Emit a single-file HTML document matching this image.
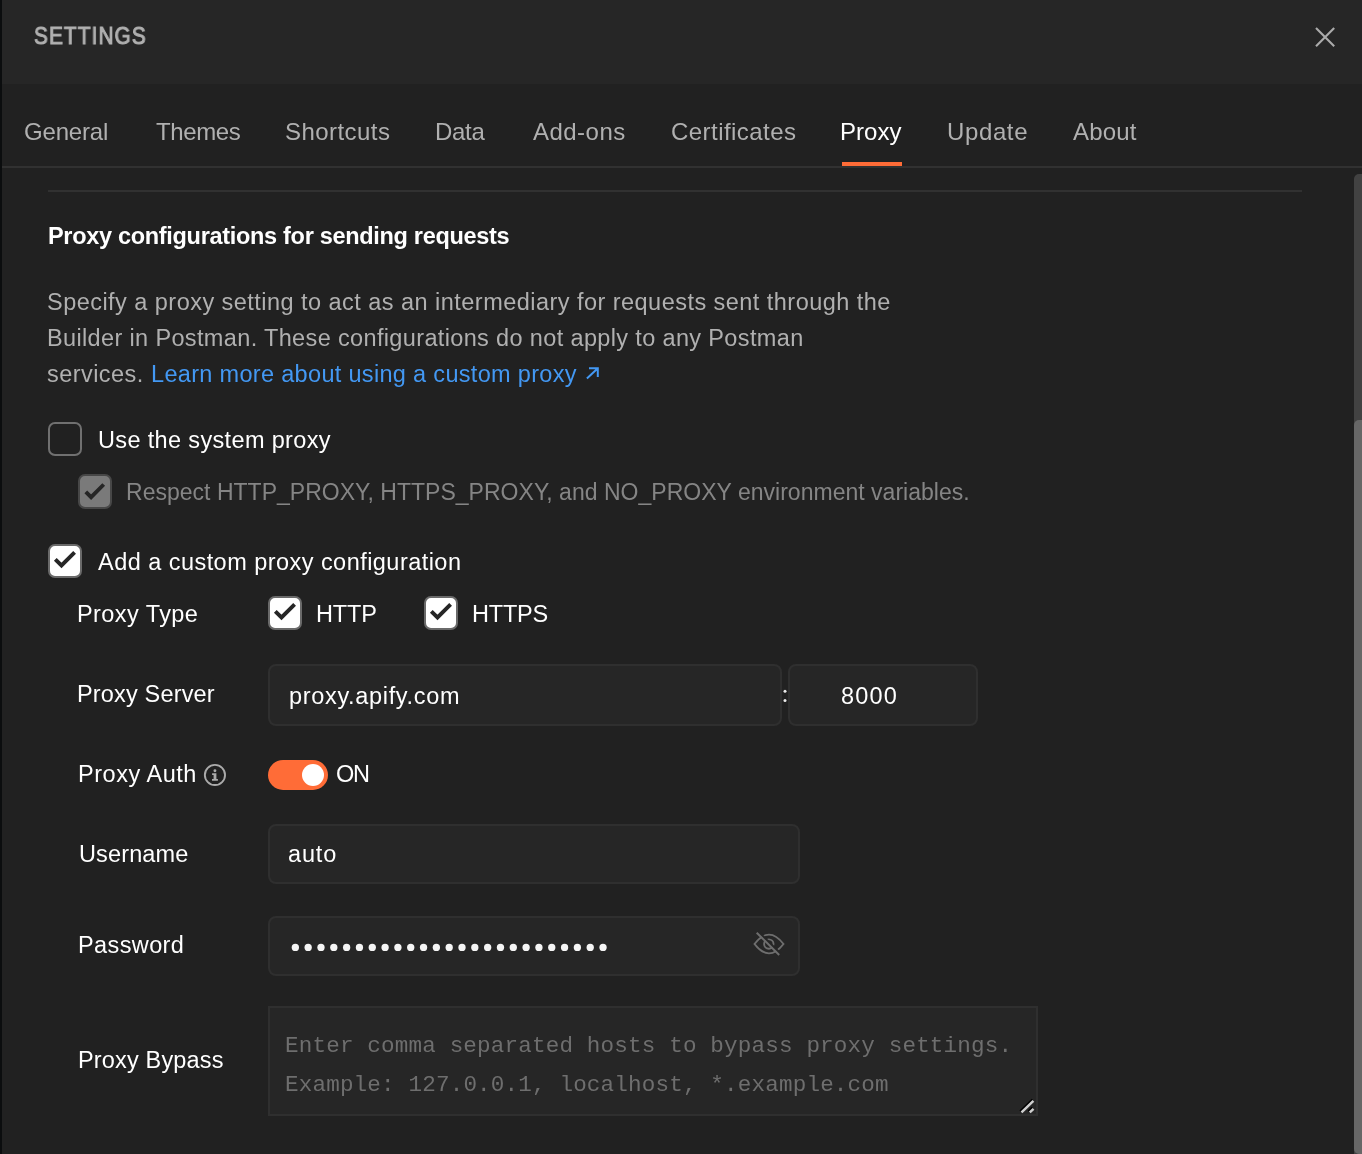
<!DOCTYPE html>
<html><head><meta charset="utf-8">
<style>
*{box-sizing:border-box;margin:0;padding:0}
html,body{width:1362px;height:1154px;overflow:hidden;background:#212121;font-family:"Liberation Sans",sans-serif;position:relative;-webkit-font-smoothing:antialiased}
.t{position:absolute;white-space:nowrap;line-height:normal;will-change:transform}
.a{position:absolute}
.cb{position:absolute;width:34px;height:34px;border-radius:7px;border:2px solid #6a6a6a;background:#fff}
.inp{position:absolute;background:#262626;border:2px solid #2f2f2f;border-radius:8px}
</style></head>
<body>
<div class="a" style="left:0;top:0;width:2px;height:1154px;background:#0b0d0e"></div>
<div class="a" style="left:2px;top:0;width:1360px;height:84px;background:#262626"></div>
<svg class="a" style="left:1305px;top:17px" width="40" height="40" viewBox="1305 17 40 40"><path d="M1316 28L1334.2 46.2M1334.2 28L1316 46.2" stroke="#ababab" stroke-width="2.1" fill="none"/></svg>
<div class="a" style="left:842px;top:162px;width:60px;height:4px;background:#ff6c37"></div>
<div class="a" style="left:2px;top:166px;width:1360px;height:2px;background:#313131"></div>
<div class="a" style="left:1354px;top:174px;width:16px;height:990px;background:#424242;border-radius:5px"></div>
<div class="a" style="left:1354px;top:420px;width:16px;height:734px;background:#676767;border-radius:5px"></div>
<div class="a" style="left:48px;top:190px;width:1254px;height:2px;background:#313131"></div>
<svg class="a" style="left:580px;top:360px" width="25" height="25" viewBox="580 360 25 25"><path d="M589 368.3H597.8V377M597.3 368.7L586.9 378.4" stroke="#4398f3" stroke-width="2" fill="none"/></svg>
<!-- checkboxes -->
<div class="cb" style="left:48px;top:422px;background:transparent;border-width:2px;border-color:#707070"></div>
<div class="cb" style="left:78.4px;top:474.2px;width:33.3px;height:35.3px;background:#7a7a7a;border-color:#474747"></div>
<svg class="a" style="left:78px;top:474px" width="36" height="36" viewBox="78.4 474.2 36 36"><path d="M86.2 492.1L91.5 497.4L104.1 484.7" stroke="#262626" stroke-width="3.9" fill="none"/></svg>
<div class="cb" style="left:48px;top:544px"></div>
<svg class="a" style="left:48px;top:544px" width="34" height="34" viewBox="0 0 34 34"><path d="M7.3 15.3L13.5 21.5L26.6 8.4" stroke="#262626" stroke-width="3.9" fill="none"/></svg>
<div class="cb" style="left:268.3px;top:596px"></div>
<svg class="a" style="left:268.3px;top:596px" width="34" height="34" viewBox="0 0 34 34"><path d="M7.3 15.3L13.5 21.5L26.6 8.4" stroke="#262626" stroke-width="3.9" fill="none"/></svg>
<div class="cb" style="left:424px;top:596px"></div>
<svg class="a" style="left:424px;top:596px" width="34" height="34" viewBox="0 0 34 34"><path d="M7.3 15.3L13.5 21.5L26.6 8.4" stroke="#262626" stroke-width="3.9" fill="none"/></svg>
<!-- inputs -->
<div class="inp" style="left:268px;top:664px;width:514px;height:62px"></div>
<svg class="a" style="left:780px;top:685px" width="10" height="20" viewBox="780 685 10 20"><circle cx="785" cy="691.3" r="1.5" fill="#ececec"/><circle cx="785" cy="700.6" r="1.5" fill="#ececec"/></svg>
<div class="inp" style="left:788px;top:664px;width:190px;height:62px"></div>
<div class="a" style="left:268px;top:760px;width:60px;height:30px;border-radius:15px;background:#ff6c37"></div>
<div class="a" style="left:302px;top:764px;width:22px;height:22px;border-radius:11px;background:#fff"></div>
<svg class="a" style="left:200px;top:760px" width="30" height="30" viewBox="200 760 30 30"><circle cx="214.95" cy="774.95" r="10.1" stroke="#ababab" stroke-width="1.9" fill="none"/><circle cx="214.95" cy="770.8" r="1.45" fill="#ababab"/><path d="M212.1 773.3H216.4V780.8H212V779H213.6V775.1H212.1Z M213.6 779H217.9V780.8H212Z" fill="#ababab"/></svg>
<div class="inp" style="left:268px;top:824px;width:532px;height:60px"></div>
<div class="inp" style="left:268px;top:916px;width:532px;height:60px"></div>
<svg class="a" style="left:280px;top:935px" width="340" height="25" viewBox="280 935 340 25" id="dots"><circle cx="295.35" cy="947.4" r="3.65" fill="#f5f5f5"/><circle cx="308.17" cy="947.4" r="3.65" fill="#f5f5f5"/><circle cx="320.99" cy="947.4" r="3.65" fill="#f5f5f5"/><circle cx="333.81" cy="947.4" r="3.65" fill="#f5f5f5"/><circle cx="346.63" cy="947.4" r="3.65" fill="#f5f5f5"/><circle cx="359.45" cy="947.4" r="3.65" fill="#f5f5f5"/><circle cx="372.27" cy="947.4" r="3.65" fill="#f5f5f5"/><circle cx="385.09" cy="947.4" r="3.65" fill="#f5f5f5"/><circle cx="397.91" cy="947.4" r="3.65" fill="#f5f5f5"/><circle cx="410.73" cy="947.4" r="3.65" fill="#f5f5f5"/><circle cx="423.55" cy="947.4" r="3.65" fill="#f5f5f5"/><circle cx="436.37" cy="947.4" r="3.65" fill="#f5f5f5"/><circle cx="449.19" cy="947.4" r="3.65" fill="#f5f5f5"/><circle cx="462.01" cy="947.4" r="3.65" fill="#f5f5f5"/><circle cx="474.83" cy="947.4" r="3.65" fill="#f5f5f5"/><circle cx="487.65" cy="947.4" r="3.65" fill="#f5f5f5"/><circle cx="500.47" cy="947.4" r="3.65" fill="#f5f5f5"/><circle cx="513.29" cy="947.4" r="3.65" fill="#f5f5f5"/><circle cx="526.11" cy="947.4" r="3.65" fill="#f5f5f5"/><circle cx="538.93" cy="947.4" r="3.65" fill="#f5f5f5"/><circle cx="551.75" cy="947.4" r="3.65" fill="#f5f5f5"/><circle cx="564.57" cy="947.4" r="3.65" fill="#f5f5f5"/><circle cx="577.39" cy="947.4" r="3.65" fill="#f5f5f5"/><circle cx="590.21" cy="947.4" r="3.65" fill="#f5f5f5"/><circle cx="603.03" cy="947.4" r="3.65" fill="#f5f5f5"/></svg>
<svg class="a" style="left:748px;top:926px" width="42" height="36" viewBox="748 926 42 36"><path d="M754.5 944Q769 925.2 783.5 944Q769 962.8 754.5 944Z" stroke="#6e6e6e" stroke-width="1.9" fill="none" stroke-linejoin="miter"/><circle cx="768.8" cy="944.1" r="4.7" stroke="#6e6e6e" stroke-width="1.9" fill="none"/><path d="M758.2 931.6L780.7 953.9" stroke="#262626" stroke-width="2.4"/><path d="M756.7 932.7L779.2 955" stroke="#6e6e6e" stroke-width="2"/></svg>
<div class="a" style="left:268px;top:1006px;width:770px;height:110px;background:#262626;border:2px solid #2f2f2f"></div>
<svg class="a" style="left:1015px;top:1095px" width="23" height="21" viewBox="1015 1095 23 21"><path d="M1020.3 1111.3L1032.6 1099.6M1028.5 1111.4L1032.4 1107.7" stroke="#000" stroke-width="2.4"/><path d="M1021.5 1112.3L1033.4 1100.9M1029.8 1112.4L1033.5 1108.9" stroke="#cfcfcf" stroke-width="2.5"/></svg>
<div class="t" id="title" style="left:33.80px;top:22.70px;font-family:'Liberation Sans',sans-serif;font-weight:400;font-size:23px;color:#b0b0b0;letter-spacing:1.300px;-webkit-text-stroke:1px #b0b0b0;transform:scaleX(0.9);transform-origin:0 0">SETTINGS</div>
<div class="t" id="t1" style="left:24.20px;top:118.32px;font-family:'Liberation Sans',sans-serif;font-weight:400;font-size:24px;color:#b0b0b0;letter-spacing:-0.167px;">General</div>
<div class="t" id="t2" style="left:155.60px;top:118.32px;font-family:'Liberation Sans',sans-serif;font-weight:400;font-size:24px;color:#b0b0b0;letter-spacing:-0.380px;">Themes</div>
<div class="t" id="t3" style="left:285.20px;top:118.32px;font-family:'Liberation Sans',sans-serif;font-weight:400;font-size:24px;color:#b0b0b0;letter-spacing:0.450px;">Shortcuts</div>
<div class="t" id="t4" style="left:435.00px;top:118.32px;font-family:'Liberation Sans',sans-serif;font-weight:400;font-size:24px;color:#b0b0b0;letter-spacing:-0.300px;">Data</div>
<div class="t" id="t5" style="left:533.40px;top:118.32px;font-family:'Liberation Sans',sans-serif;font-weight:400;font-size:24px;color:#b0b0b0;letter-spacing:0.467px;">Add-ons</div>
<div class="t" id="t6" style="left:671.20px;top:118.32px;font-family:'Liberation Sans',sans-serif;font-weight:400;font-size:24px;color:#b0b0b0;letter-spacing:0.455px;">Certificates</div>
<div class="t" id="t7" style="left:840.40px;top:118.32px;font-family:'Liberation Sans',sans-serif;font-weight:400;font-size:24px;color:#ffffff;letter-spacing:0.025px;">Proxy</div>
<div class="t" id="t8" style="left:946.80px;top:118.32px;font-family:'Liberation Sans',sans-serif;font-weight:400;font-size:24px;color:#b0b0b0;letter-spacing:0.620px;">Update</div>
<div class="t" id="t9" style="left:1073.40px;top:118.32px;font-family:'Liberation Sans',sans-serif;font-weight:400;font-size:24px;color:#b0b0b0;letter-spacing:0.175px;">About</div>
<div class="t" id="h2" style="left:48.20px;top:223.10px;font-family:'Liberation Sans',sans-serif;font-weight:700;font-size:23.5px;color:#ffffff;letter-spacing:-0.309px;">Proxy configurations for sending requests</div>
<div class="t" id="p1" style="left:47.00px;top:289.32px;font-family:'Liberation Sans',sans-serif;font-weight:400;font-size:23.5px;color:#b0b0b0;letter-spacing:0.463px;">Specify a proxy setting to act as an intermediary for requests sent through the</div>
<div class="t" id="p2" style="left:46.60px;top:325.01px;font-family:'Liberation Sans',sans-serif;font-weight:400;font-size:23.5px;color:#b0b0b0;letter-spacing:0.355px;">Builder in Postman. These configurations do not apply to any Postman</div>
<div class="t" id="p3" style="left:47.00px;top:361.01px;font-family:'Liberation Sans',sans-serif;font-weight:400;font-size:23.5px;color:#b0b0b0;letter-spacing:0.438px;">services.</div>
<div class="t" id="p4" style="left:150.60px;top:361.01px;font-family:'Liberation Sans',sans-serif;font-weight:400;font-size:23.5px;color:#4398f3;letter-spacing:0.319px;">Learn more about using a custom proxy</div>
<div class="t" id="l1" style="left:98.20px;top:427.01px;font-family:'Liberation Sans',sans-serif;font-weight:400;font-size:23.5px;color:#ffffff;letter-spacing:0.347px;">Use the system proxy</div>
<div class="t" id="l2" style="left:126.40px;top:479.00px;font-family:'Liberation Sans',sans-serif;font-weight:400;font-size:23px;color:#858585;letter-spacing:0.019px;">Respect HTTP_PROXY, HTTPS_PROXY, and NO_PROXY environment variables.</div>
<div class="t" id="l3" style="left:98.00px;top:548.91px;font-family:'Liberation Sans',sans-serif;font-weight:400;font-size:23.5px;color:#ffffff;letter-spacing:0.458px;">Add a custom proxy configuration</div>
<div class="t" id="l4" style="left:77.40px;top:601.01px;font-family:'Liberation Sans',sans-serif;font-weight:400;font-size:23.5px;color:#ffffff;letter-spacing:0.422px;">Proxy Type</div>
<div class="t" id="l5" style="left:316.20px;top:601.01px;font-family:'Liberation Sans',sans-serif;font-weight:400;font-size:23.5px;color:#ffffff;letter-spacing:-0.133px;">HTTP</div>
<div class="t" id="l6" style="left:472.20px;top:601.01px;font-family:'Liberation Sans',sans-serif;font-weight:400;font-size:23.5px;color:#ffffff;letter-spacing:-0.225px;">HTTPS</div>
<div class="t" id="l7" style="left:77.40px;top:681.21px;font-family:'Liberation Sans',sans-serif;font-weight:400;font-size:23.5px;color:#ffffff;letter-spacing:0.164px;">Proxy Server</div>
<div class="t" id="v1" style="left:289.00px;top:683.01px;font-family:'Liberation Sans',sans-serif;font-weight:400;font-size:23.5px;color:#ffffff;letter-spacing:0.671px;">proxy.apify.com</div>
<div class="t" id="v2" style="left:840.80px;top:683.01px;font-family:'Liberation Sans',sans-serif;font-weight:400;font-size:23.5px;color:#ffffff;letter-spacing:1.167px;">8000</div>
<div class="t" id="l8" style="left:77.80px;top:760.82px;font-family:'Liberation Sans',sans-serif;font-weight:400;font-size:23.5px;color:#ffffff;letter-spacing:0.533px;">Proxy Auth</div>
<div class="t" id="l9" style="left:336.00px;top:760.91px;font-family:'Liberation Sans',sans-serif;font-weight:400;font-size:23.5px;color:#ffffff;letter-spacing:-1.300px;">ON</div>
<div class="t" id="l10" style="left:78.60px;top:840.91px;font-family:'Liberation Sans',sans-serif;font-weight:400;font-size:23.5px;color:#ffffff;letter-spacing:0.129px;">Username</div>
<div class="t" id="v3" style="left:288.20px;top:841.01px;font-family:'Liberation Sans',sans-serif;font-weight:400;font-size:23.5px;color:#ffffff;letter-spacing:0.867px;">auto</div>
<div class="t" id="l11" style="left:77.60px;top:931.51px;font-family:'Liberation Sans',sans-serif;font-weight:400;font-size:23.5px;color:#ffffff;letter-spacing:0.386px;">Password</div>
<div class="t" id="l12" style="left:77.60px;top:1046.82px;font-family:'Liberation Sans',sans-serif;font-weight:400;font-size:23.5px;color:#ffffff;letter-spacing:0.164px;">Proxy Bypass</div>
<div class="t" id="m1" style="left:284.60px;top:1032.80px;font-family:'Liberation Mono',monospace;font-weight:400;font-size:22.6px;color:#6e6e6e;letter-spacing:0.162px;">Enter comma separated hosts to bypass proxy settings.</div>
<div class="t" id="m2" style="left:284.60px;top:1071.50px;font-family:'Liberation Mono',monospace;font-weight:400;font-size:22.6px;color:#6e6e6e;letter-spacing:0.163px;">Example: 127.0.0.1, localhost, *.example.com</div>
</body></html>
